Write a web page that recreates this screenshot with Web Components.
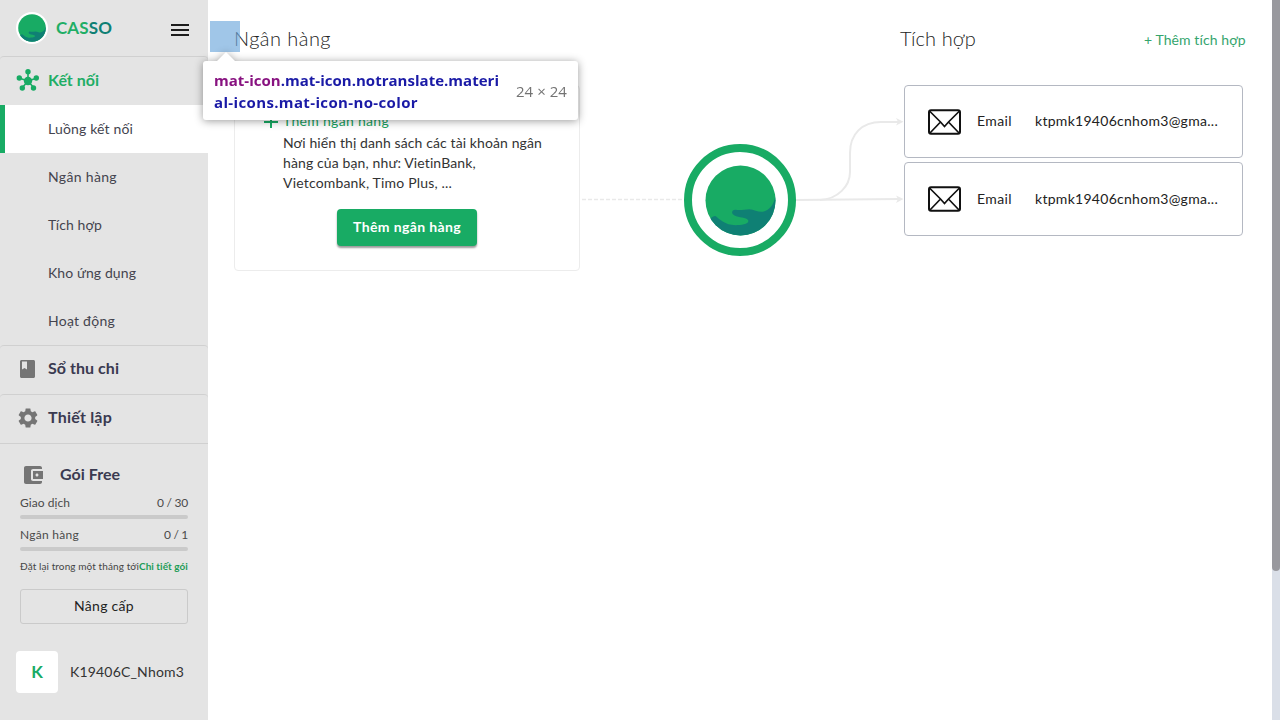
<!DOCTYPE html>
<html lang="vi">
<head>
<meta charset="utf-8">
<title>Casso</title>
<style>
html,body{margin:0;height:100%;overflow:hidden;background:#fff}
body{font-family:Lato,"Open Sans","Noto Sans",sans-serif;font-size:14px;color:#333}
</style>
</head>
<body>
<casso-app></casso-app>
<script>
const define = (name, html, init) => customElements.define(name, class extends HTMLElement {
  connectedCallback() {
    if (this.shadowRoot) return;
    const tpl = document.createElement('template');
    tpl.innerHTML = html;
    this.attachShadow({mode: 'open'}).append(tpl.content.cloneNode(true));
    if (init) init(this, this.shadowRoot);
  }
});

/* A single line of text, tracked so that it fills the width given in "w". */
define('fit-text', `<style>:host{display:inline-block;white-space:nowrap;flex:none}span{display:inline-block}</style><span><slot></slot></span>`,
  (host, root) => {
    const w = +host.getAttribute('w'), span = root.querySelector('span');
    const n = [...host.textContent].length;
    host.style.width = w + 'px';
    span.style.letterSpacing = ((w - span.getBoundingClientRect().width) / n) + 'px';
  });

/* Round brand picture: green disc with a teal wave. */
define('casso-mark', `<style>:host{display:block;flex:none}svg{display:block;width:100%;height:100%}</style>
<svg viewBox="0 0 72 72"><defs><clipPath id="c"><circle cx="36" cy="36" r="35.5"/></clipPath></defs>
<circle cx="36" cy="36" r="35.5" fill="#18ab64"/>
<path clip-path="url(#c)" fill="#0f8074" d="M72 27C71.500 37 67 44 61.500 46.500C56 49 51 45.500 45 44.800C40 44.800 36 46.500 31 45.300C27 45 26 49.500 30 51.200C34 53.500 42 53 43.800 56C45 60 37 61 31 61C20 61 15 55 11 52C8.500 51 6 54 3 57L12 74H74Z"/></svg>`);

define('nav-section', `<style>
:host{display:block;border-top:1px solid #d0d0d0;border-radius:4px 4px 0 0;box-sizing:border-box;color:#3a3a50}
:host([active]){color:#1fae66}
header{display:flex;align-items:center;height:48px;font-size:16px;font-weight:700}
.i{width:48px;padding:0 0 2px 16px;box-sizing:border-box;display:flex}
.t{padding-bottom:5px}
:host([active]) .t{padding-bottom:4px}
</style><header><span class="i"><slot name="icon"></slot></span><span class="t"><slot name="title"></slot></span></header><slot></slot>`);

define('nav-item', `<style>
:host{display:flex;align-items:center;height:48px;padding:0 0 2px 48px;box-sizing:border-box;color:#44444f;font-weight:400}
:host([selected]){background:#fff;border-left:5px solid #18ab64;padding-left:43px}
</style><slot></slot>`);

define('usage-meter', `<style>
:host{display:block;height:32px;font-size:12px;color:#4a4a4a}
div{display:flex;justify-content:space-between;line-height:20px;height:22px}
i{display:block;height:4px;border-radius:2px;background:#cacaca}
</style><div><slot name="label"></slot><slot name="value"></slot></div><i></i>`);

define('casso-sidebar', `<style>
:host{display:flex;flex-direction:column;width:208px;height:720px;background:#e4e4e4;flex:none}
.brand{display:flex;align-items:center;height:56px;padding:0 18px 0 16px;box-sizing:border-box}
.logo{width:28px;height:28px;padding:2px;background:#fff;border-radius:50%}
.logo casso-mark{width:28px;height:28px}
.name{font-size:17px;font-weight:700;color:#1fae66;margin-left:8px;padding-bottom:1px;flex:1}
.name b{color:#0f8074;font-weight:700}
.menu{width:18px;height:12px;margin:4px 1px 0 0;display:flex;flex-direction:column;justify-content:space-between}
.menu i{height:2px;background:#1c1c1c}
svg{display:block}
.plan{border-top:1px solid #d0d0d0;padding:16px 20px 0}
.ph{display:flex;align-items:center;height:30px;font-size:16px;font-weight:700;color:#3a3a50}
.ph svg{margin:0 16px 0 2px}
.ph fit-text{padding-bottom:3px}
.meters{padding-top:3px}
.reset{display:flex;font-size:10px;line-height:16px;color:#444;margin-top:1px}
.reset .d{color:#1d9c57;font-weight:700}
.up{height:35px;box-sizing:border-box;border:1px solid #cacaca;border-radius:3px;margin-top:15px;padding-bottom:2px;display:flex;align-items:center;justify-content:center;color:#222}
.user{display:flex;align-items:center;margin:27px 16px 0;color:#333}
.av{width:42px;height:42px;border-radius:4px;background:#fff;color:#18ab64;font-size:17px;font-weight:700;display:flex;align-items:center;justify-content:center;margin-right:12px;padding-bottom:1px;box-sizing:border-box}
.user fit-text{padding-bottom:2px}
</style>
<div class="brand"><div class="logo"><casso-mark></casso-mark></div><div class="name"><fit-text w="56">CAS<b>SO</b></fit-text></div><div class="menu"><i></i><i></i><i></i></div></div>
<nav-section active>
<svg slot="icon" width="24" height="24" viewBox="0 0 24 24" fill="#18ab64" stroke="#18ab64"><g stroke-width="1.6"><path d="M12 13V4M12 13 3 10M12 13 21 10M12 13 6 20M12 13 18 20"/></g><g stroke="none"><circle cx="12" cy="13" r="4.2"/><circle cx="12" cy="3.800" r="2.700"/><circle cx="3.300" cy="10" r="2.700"/><circle cx="20.300" cy="10" r="2.700"/><circle cx="6.300" cy="20" r="2.700"/><circle cx="17.500" cy="20" r="2.700"/></g></svg>
<fit-text slot="title" w="51">Kết nối</fit-text>
<nav-item selected><fit-text w="85">Luồng kết nối</fit-text></nav-item>
<nav-item><fit-text w="69">Ngân hàng</fit-text></nav-item>
<nav-item><fit-text w="54">Tích hợp</fit-text></nav-item>
<nav-item><fit-text w="88">Kho ứng dụng</fit-text></nav-item>
<nav-item><fit-text w="67">Hoạt động</fit-text></nav-item>
</nav-section>
<nav-section>
<svg slot="icon" width="24" height="24" viewBox="0 0 24 24"><path fill="#757575" fill-rule="evenodd" d="M18.500 3H5.500C4.700 3 4 3.700 4 4.500v15c0 .8.700 1.500 1.500 1.500h12c.8 0 1.500-.7 1.500-1.500v-15c0-.8-.7-1.500-1.500-1.500ZM6 4.500h5v8l-2.500-1.500L6 12.500z"/></svg>
<fit-text slot="title" w="71">Sổ thu chi</fit-text></nav-section>
<nav-section>
<svg slot="icon" width="24" height="24" viewBox="0 0 24 24"><path fill="#757575" d="M19.140 12.940c.04-.3.060-.61.060-.94 0-.32-.02-.64-.07-.94l2.030-1.580c.18-.14.230-.41.120-.61l-1.920-3.320c-.12-.22-.37-.29-.59-.22l-2.390.96c-.5-.38-1.030-.7-1.620-.94l-.36-2.540c-.04-.24-.24-.41-.48-.41h-3.840c-.24 0-.43.170-.47.410l-.36 2.540c-.59.240-1.130.570-1.620.940l-2.390-.96c-.22-.08-.47 0-.59.220L2.740 8.870c-.12.210-.08.470.120.610l2.030 1.580c-.05.300-.09.630-.09.940s.020.640.070.940l-2.030 1.580c-.18.140-.23.410-.12.610l1.920 3.320c.12.220.370.290.590.220l2.390-.96c.5.380 1.030.700 1.620.940l.36 2.540c.05.240.240.410.480.410h3.840c.24 0 .44-.17.470-.41l.36-2.540c.59-.24 1.130-.56 1.620-.94l2.390.96c.22.080.470 0 .59-.22l1.920-3.320c.12-.22.070-.47-.12-.61l-2.010-1.580zM12 15.600c-1.980 0-3.600-1.620-3.600-3.600s1.620-3.600 3.600-3.600 3.600 1.620 3.600 3.600-1.620 3.600-3.600 3.600z"/></svg>
<fit-text slot="title" w="64">Thiết lập</fit-text></nav-section>
<div class="plan">
<div class="ph"><svg width="22" height="22" viewBox="1 1 22 22" fill="#757575"><path d="M21 18v1c0 1.100-.9 2-2 2H5c-1.110 0-2-.9-2-2V5c0-1.100.890-2 2-2h14c1.100 0 2 .9 2 2v1h-9c-1.110 0-2 .9-2 2v8c0 1.100.890 2 2 2h9zm-9-2h10V8H12v8zm4-2.500c-.83 0-1.500-.67-1.500-1.500s.670-1.500 1.500-1.500 1.500.670 1.500 1.500-.67 1.500-1.500 1.500z"/></svg><fit-text w="60">Gói Free</fit-text></div>
<div class="meters">
<usage-meter><fit-text slot="label" w="50">Giao dịch</fit-text><fit-text slot="value" w="31">0 / 30</fit-text></usage-meter>
<usage-meter><fit-text slot="label" w="59">Ngân hàng</fit-text><fit-text slot="value" w="24">0 / 1</fit-text></usage-meter></div>
<div class="reset"><fit-text w="119">Đặt lại trong một tháng tới</fit-text><fit-text class="d" w="49">Chi tiết gói</fit-text></div>
<div class="up"><fit-text w="60">Nâng cấp</fit-text></div>
</div>
<div class="user"><div class="av">K</div><fit-text w="114">K19406C_Nhom3</fit-text></div>`);

define('bank-card', `<style>
:host{display:block;width:346px;height:186px;box-sizing:border-box;border:1px solid #ececec;border-radius:4px;padding:25px 0 0 28px}
.add{display:flex;align-items:center;height:20px;color:#18a060;gap:4px}
.add fit-text{padding-bottom:1px}
.desc{display:flex;flex-direction:column;padding:2px 0 0 20px;line-height:20px;color:#333}
button{display:flex;align-items:center;justify-content:center;width:140px;height:37px;margin:16px 0 0 74px;border:0;border-radius:4px;padding:0 0 2px;background:#18ab64;color:#fff;font:700 14px Lato,"Open Sans",sans-serif;box-shadow:0 2px 2px rgba(0,0,0,.4)}
</style>
<div class="add"><svg width="16" height="16" viewBox="0 0 16 16"><path d="M8 1v14M1 9h14" stroke="#18ab64" stroke-width="2"/></svg><fit-text w="106">Thêm ngân hàng</fit-text></div>
<div class="desc"><fit-text w="259">Nơi hiển thị danh sách các tài khoản ngân</fit-text><fit-text w="193">hàng của bạn, như: VietinBank,</fit-text><fit-text w="169">Vietcombank, Timo Plus, ...</fit-text></div>
<button><fit-text w="108">Thêm ngân hàng</fit-text></button>`);

define('flow-links', `<style>
:host{display:grid;width:324px;height:186px;flex:none}
svg,.hub{grid-area:1/1}
.hub{width:71px;height:71px;padding:12.500px;border:8px solid #18ab64;border-radius:50%;background:#fff;margin:59px 0 0 104px}
casso-mark{width:71px;height:71px}
</style>
<svg width="324" height="186" viewBox="580 85 324 186" fill="none" stroke="#e9e9e9" stroke-width="2">
<path d="M582 199.500H686" stroke-width="1.500" stroke-dasharray="4 2"/>
<path d="M795 200 L899 199"/><path d="M820 200C838 199 850 186 850 172V153C850 134 862 122 881 122H899"/>
<path fill="#e9e9e9" stroke="none" d="M896 195.500 903.500 199 896 203 898 199ZM896 118 903.500 121.800 896 125.500 898 121.800Z"/></svg>
<div class="hub"><casso-mark></casso-mark></div>`);

define('integration-card', `<style>
:host{display:flex;align-items:center;width:339px;height:74px;box-sizing:border-box;border:1px solid #b4b8c2;border-radius:4px;padding-left:23px;color:#222}
fit-text{display:block;padding-bottom:2px}.n{margin:0 23px 0 16px}
</style><svg width="33" height="26" viewBox="0 0 33 26" fill="none" stroke="#111" stroke-width="2"><rect x="1" y="1.200" width="31" height="23.600" rx="2"/><path stroke-width="1.700" d="M1.500 2 12.500 13 16.500 17.500 20.500 13 31.500 2M12.500 13 1.500 24.500M20.500 13 31.500 24.500"/></svg>
<fit-text class="n" w="35">Email</fit-text><fit-text w="183">ktpmk19406cnhom3@gma...</fit-text>`);

define('inspect-tip', `<style>
:host{position:absolute;left:203px;top:61px;width:375px;height:59px;box-sizing:border-box;padding:8px 11px 0;background:#fff;border-radius:3px;filter:drop-shadow(0 1px 4px rgba(0,0,0,.4));display:flex;justify-content:space-between;font:700 15px/22px "Open Sans","Noto Sans",sans-serif;color:#1a1aa6}
:host::before{content:"";position:absolute;left:14px;top:-9px;border:9px solid transparent;border-top:0;border-bottom-color:#fff}
b{color:#881280;font-weight:700}.sel{display:flex;flex-direction:column}
.size{color:#737373;font-weight:400;padding-top:11px}
</style><div class="sel"><fit-text w="285"><b>mat-icon</b>.mat-icon.notranslate.materi</fit-text><fit-text w="204">al-icons.mat-icon-no-color</fit-text></div><fit-text class="size" w="51">24 × 24</fit-text>`);

define('casso-app', `<style>
:host{display:flex;position:relative;width:1280px;height:720px;overflow:hidden}
main{flex:1;min-width:0;box-sizing:border-box;padding:0 26px}
.heads{display:flex;align-items:center;height:85px;box-sizing:border-box;font-size:20px;font-weight:300;color:#222;padding-bottom:10px}
.heads .r{margin-left:569px}
.heads .add{font-size:14px;font-weight:400;color:#35a56d;margin-left:168px;padding-top:4px}
.flow{display:flex}
.list{display:flex;flex-direction:column;gap:4px}
.list :first-child{height:73px}
.bar{width:8px;flex:none;background:#dadfe8}
.bar i{display:block;height:571px;background:#99999e;border-radius:0 0 4px 4px}
.hl{position:absolute;left:210px;top:21px;width:30px;height:30.500px;background:rgba(111,168,220,.66)}
</style>
<casso-sidebar></casso-sidebar>
<main><div class="heads"><fit-text w="97">Ngân hàng</fit-text><fit-text class="r" w="76">Tích hợp</fit-text><fit-text class="add" w="102">+ Thêm tích hợp</fit-text></div>
<div class="flow"><bank-card></bank-card><flow-links></flow-links><div class="list"><integration-card></integration-card><integration-card></integration-card></div></div></main>
<div class="bar"><i></i></div><div class="hl"></div><inspect-tip></inspect-tip>`);
</script>
</body>
</html>
